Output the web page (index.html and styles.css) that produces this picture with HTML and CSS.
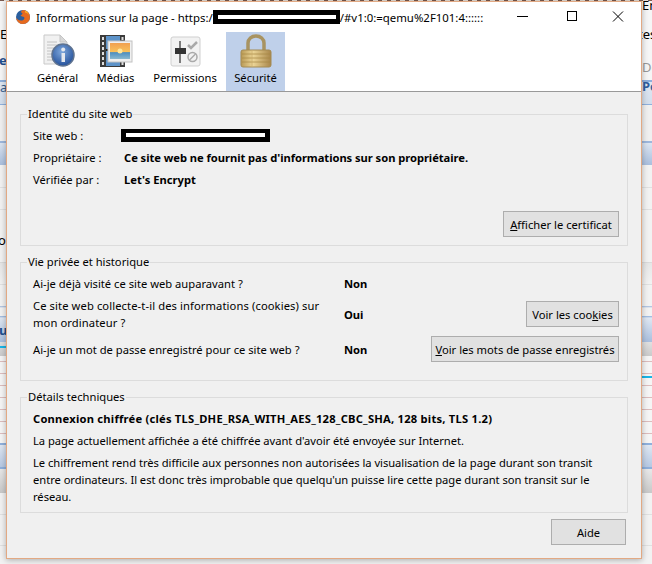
FILE: index.html
```html
<!DOCTYPE html>
<html lang="fr">
<head>
  <meta charset="UTF-8">
  <meta name="viewport" content="width=device-width, initial-scale=1.0">
  <title>Informations sur la page</title>
  <link rel="stylesheet" href="styles.css">
</head>
<body>
  <!-- bits of the browser window behind the dialog -->
  <div class="backdrop">
    <span class="frag frag-e">E</span>
    <span class="frag frag-e2">e</span>
    <span class="frag frag-a">a</span>
    <span class="frag frag-oi">oi</span>
    <span class="frag frag-u">u</span>
    <span class="frag frag-en">En</span>
    <span class="frag frag-tes">tes</span>
    <span class="frag frag-de">Dé</span>
    <span class="frag frag-pe">Pe</span>
    <span class="cyan cyan-left"></span>
    <span class="cyan cyan-right"></span>
  </div>

  <div class="window">
    <div class="titlebar">
      <svg class="app-icon" width="16" height="16" viewBox="0 0 16 16">
        <circle cx="8" cy="8" r="7" fill="#2b5f9e"/>
        <path d="M8 1a7 7 0 0 1 7 7 7 7 0 0 1-7 7 7 7 0 0 1-7-6.500c1 2 3 3 5 3 3 0 4-2 3-3.500-1-.5-3-.5-3.500-1.500 1-1 2-1 2-2-1-1-1.500-1-1.500-2C6 3 6.500 1.500 8 1z" fill="#e66a1f"/>
        <path d="M10 1.500c2 .8 3.500 2.500 4 4.500-1-1.500-2.500-2.500-4-2.500z" fill="#f7b32b"/>
      </svg>
      <span class="title-text">Informations sur la page - https:/</span>
      <span class="redact-title"><span></span></span>
      <span class="title-text">/#v1:0:=qemu%2F101:4::::::</span>
      <div class="controls">
        <svg width="46" height="12" viewBox="0 0 46 12"><path d="M14 5.500h11" stroke="#000" fill="none"/></svg>
        <svg width="46" height="12" viewBox="0 0 46 12"><rect x="18.500" y=".5" width="9" height="9" stroke="#000" fill="none"/></svg>
        <svg width="46" height="12" viewBox="0 0 46 12"><path d="M18 .5l10 10M28 .5l-10 10" stroke="#000" fill="none"/></svg>
      </div>
    </div>

    <div class="tabs">
      <div class="tab tab-general">
        <svg width="34" height="34" viewBox="0 0 34 34">
          <defs>
            <radialGradient id="infoBlue" cx="45%" cy="35%" r="70%">
              <stop offset="0" stop-color="#7fa8dc"/>
              <stop offset="1" stop-color="#1d4a96"/>
            </radialGradient>
          </defs>
          <path d="M3 1h16l7 7v22H3z" fill="#f1f1f1" stroke="#c9c9c9"/>
          <path d="M19 1v7h7z" fill="#d8d8d8" stroke="#c4c4c4"/>
          <path d="M6 8h10M6 11h14M6 14h12M6 17h8M6 20h8M6 23h8M6 26h9" stroke="#c2c2c2"/>
          <circle cx="22" cy="21" r="11" fill="url(#infoBlue)" stroke="#5f7390" stroke-width="1.500"/>
          <rect x="20.500" y="19" width="3.500" height="9" fill="#e4e8ee"/>
          <circle cx="22.200" cy="15.500" r="2" fill="#e4e8ee"/>
        </svg>
        <span>Général</span>
      </div>
      <div class="tab tab-media">
        <svg width="34" height="34" viewBox="0 0 34 34">
          <defs>
            <linearGradient id="sunset" x1="0" y1="0" x2="0" y2="1">
              <stop offset="0" stop-color="#f0a050"/>
              <stop offset=".55" stop-color="#f9c15a"/>
              <stop offset=".6" stop-color="#4d8fc0"/>
              <stop offset="1" stop-color="#89b9cf"/>
            </linearGradient>
          </defs>
          <rect x="1" y="1" width="25" height="32" fill="#3b3b3b"/>
          <rect x="7" y="2" width="14" height="30" fill="#5d93c9"/>
          <path d="M3 3h2v3H3zM3 8h2v3H3zM3 13h2v3H3zM3 18h2v3H3zM3 23h2v3H3zM3 28h2v3H3zM22.500 3h2v3h-2zM22.500 28h2v3h-2z" fill="#dedede"/>
          <path d="M7 16h7" stroke="#1f1f1f" stroke-width="2"/>
          <rect x="9" y="7" width="24" height="21" fill="#f0f0f0" stroke="#c2c2c2"/>
          <rect x="11" y="9" width="20" height="16" fill="url(#sunset)"/>
          <circle cx="21" cy="17" r="2.500" fill="#ffe69a"/>
        </svg>
        <span>Médias</span>
      </div>
      <div class="tab tab-perms">
        <svg width="34" height="34" viewBox="0 0 34 34">
          <rect x="3" y="3" width="29" height="29" rx="2" fill="#f2f2f2" stroke="#cfcfcf"/>
          <path d="M12 7v22" stroke="#555" stroke-width="1.500"/>
          <rect x="7" y="14" width="11" height="6" fill="#333"/>
          <path d="M20 11l3 3 6-6" stroke="#a9a9a9" stroke-width="2.500" fill="none"/>
          <circle cx="24.500" cy="23" r="4.500" stroke="#a9a9a9" stroke-width="1.500" fill="none"/>
          <path d="M21.500 26l6-6" stroke="#a9a9a9" stroke-width="1.500"/>
        </svg>
        <span>Permissions</span>
      </div>
      <div class="tab tab-active">
        <svg width="34" height="34" viewBox="0 0 34 34">
          <defs>
            <linearGradient id="lockBody" x1="0" y1="0" x2="1" y2="0">
              <stop offset="0" stop-color="#b99a55"/>
              <stop offset=".4" stop-color="#ecd596"/>
              <stop offset="1" stop-color="#a8864a"/>
            </linearGradient>
          </defs>
          <path d="M9 17V9a8 7 0 0 1 16 0v8" fill="none" stroke="#a89361" stroke-width="3.500"/>
          <rect x="2" y="16" width="30" height="17" rx="2" fill="url(#lockBody)" stroke="#a38a52"/>
          <path d="M3 20h28M3 24h28M3 28h28" stroke="#a58643" stroke-opacity=".7"/>
          <path d="M13 17v15" stroke="#c6a868" stroke-opacity=".6"/>
        </svg>
        <span>Sécurité</span>
      </div>
    </div>

    <div class="content">
      <fieldset class="group group-identity">
        <legend>Identité du site web</legend>
        <div class="identity">
          <span>Site web :</span>
          <span class="redact-site"><span></span></span>
          <span>Propriétaire :</span>
          <b class="owner">Ce site web ne fournit pas d'informations sur son propriétaire.</b>
          <span>Vérifiée par :</span>
          <b>Let's Encrypt</b>
        </div>
        <div class="actions">
          <button class="button button-cert"><u>A</u>fficher le certificat</button>
        </div>
      </fieldset>

      <fieldset class="group group-privacy">
        <legend>Vie privée et historique</legend>
        <div class="row row-first">
          <span class="question">Ai-je déjà visité ce site web auparavant ?</span>
          <b class="answer">Non</b>
        </div>
        <div class="row row-second">
          <span class="question question-long">Ce site web collecte-t-il des informations (cookies) sur<br>mon ordinateur ?</span>
          <b class="answer">Oui</b>
          <button class="button button-cookies">Voir les coo<u>k</u>ies</button>
        </div>
        <div class="row row-third">
          <span class="question">Ai-je un mot de passe enregistré pour ce site web ?</span>
          <b class="answer">Non</b>
          <button class="button button-passwords"><u>V</u>oir les mots de passe enregistrés</button>
        </div>
      </fieldset>

      <fieldset class="group group-tech">
        <legend>Détails techniques</legend>
        <p class="tech-head"><b>Connexion chiffrée (clés TLS_DHE_RSA_WITH_AES_128_CBC_SHA, 128 bits, TLS 1.2)</b></p>
        <p>La page actuellement affichée a été chiffrée avant d'avoir été envoyée sur Internet.</p>
        <p>Le chiffrement rend très difficile aux personnes non autorisées la visualisation de la page durant son transit<br>entre ordinateurs. Il est donc très improbable que quelqu'un puisse lire cette page durant son transit sur le<br>réseau.</p>
      </fieldset>

      <div class="footer">
        <button class="button button-help">Aide</button>
      </div>
    </div>
  </div>
</body>
</html>
```

FILE: styles.css
```css
html, body {
  margin: 0;
  height: 100%;
  overflow: hidden;
}

body {
  font-family: "Noto Sans", Arial, sans-serif;
  font-size: 11.2px;
  line-height: 17px;
  color: #000;
  background-color: #f2f2f2;
}

.backdrop {
  position: absolute;
  inset: 0;
  background-image:
    linear-gradient(to right, #7a5a50 50%, #e8e0d8 50%),
    repeating-linear-gradient(to bottom, transparent 0, transparent 11px, #dcbcbc 11px, #dcbcbc 12px),
    linear-gradient(to bottom,
      #f6f6f6 0, #f6f6f6 80px, #8fb0dc 80px, #8fb0dc 82px,
      #dfe7f2 82px, #d3deec 104px, #8fb0dc 104px, #8fb0dc 105px,
      #f0f0f0 105px, #f0f0f0 141px, #9db7dc 141px, #9db7dc 143px,
      #dce5f1 143px, #a9bedd 165px, #f2f2f2 165px, #f2f2f2 187px,
      #cfcfcf 187px, #f2f2f2 188px, #f2f2f2 209px, #cfcfcf 209px,
      #f2f2f2 210px, #f2f2f2 262px, #cfcfcf 262px, #e6e6e6 263px,
      #f2f2f2 284px, #cfcfcf 284px, #f2f2f2 285px, #f2f2f2 306px,
      #9db7dc 306px, #f2f2f2 308px, #f2f2f2 316px, #8fb0dc 316px,
      #dfe7f2 318px, #a9bedd 342px, #e0e0e0 342px, #cacaca 356px,
      #f5f5f5 356px, #f5f5f5 443px, #8fb0dc 443px, #8fb0dc 445px,
      #dfe7f2 445px, #b6c8e2 467px, #8fb0dc 467px, #8fb0dc 469px,
      #e8e8e8 469px, #c8c8c8 493px, #f2f2f2 493px, #f2f2f2 514px,
      #cfcfcf 514px, #f2f2f2 515px, #f2f2f2 545px, #cfcfcf 545px, #f2f2f2 546px);
  background-size: 9px 1px, 100% 84px, 100% 100%;
  background-position: 0 0, 0 350px, 0 0;
  background-repeat: repeat-x, no-repeat, no-repeat;
}

.frag {
  position: absolute;
  font-size: 13px;
  line-height: 16px;
}

.frag-e { left: 0; top: 26px; }
.frag-e2 { left: -1px; top: 52px; color: #1f4f8f; font-weight: bold; }
.frag-a { left: 0; top: 79px; color: #36618f; }
.frag-oi { left: -2px; top: 232px; }
.frag-u { left: -1px; top: 322px; color: #1f4f8f; font-weight: bold; }
.frag-en { left: 642px; top: -3px; }
.frag-tes { left: 638px; top: 26px; }
.frag-de { left: 642px; top: 59px; color: #999; }
.frag-pe { left: 642px; top: 78px; color: #2f5f9f; font-weight: bold; }

.cyan {
  position: absolute;
  background: #19b5e6;
}

.cyan-left { left: 0; top: 346px; width: 6px; height: 2px; }
.cyan-right { left: 642px; top: 376px; width: 10px; height: 2px; }

.window {
  position: absolute;
  left: 6px;
  top: 1px;
  width: 634px;
  height: 556px;
  border: 1px solid #e2a983;
  background: #f0f0f0;
  box-shadow: 0 1px 6px rgba(0, 0, 0, 0.3);
  display: flex;
  flex-direction: column;
}

.titlebar {
  flex: none;
  height: 30px;
  background: #fff;
  display: flex;
  align-items: center;
}

.app-icon {
  margin-left: 8px;
  margin-right: 5px;
}

.title-text {
  font-size: 11.4px;
  white-space: nowrap;
}

.redact-title {
  width: 127px;
  height: 14px;
  background: #000;
  display: flex;
  align-items: center;
  justify-content: flex-end;
  padding-right: 4px;
  box-sizing: border-box;
}

.redact-title span {
  width: 118px;
  height: 4px;
  background: #fff;
}

.controls {
  margin-left: auto;
  display: flex;
}

.tabs {
  flex: none;
  height: 59px;
  background: #fff;
  border-bottom: 1px solid #999;
  display: flex;
  padding-left: 21px;
}

.tab {
  display: flex;
  flex-direction: column;
  align-items: center;
  justify-content: flex-end;
  padding-bottom: 5px;
  gap: 1px;
}

.tab-general { width: 59px; }
.tab-media { width: 57px; }
.tab-perms { width: 82px; }

.tab-active {
  width: 59px;
  background: #bfd0ea;
}

.content {
  flex: 1;
  padding: 14px 13px 0;
}

.group {
  margin: 8px 0 0;
  padding: 0 8px 0 12px;
  border: 1px solid #dcdcdc;
  min-width: 0;
}

.group:first-child {
  margin-top: 0;
}

.group legend {
  padding: 0 1px;
  line-height: 16px;
  margin-left: -6px;
}

.identity {
  display: grid;
  grid-template-columns: 91px 1fr;
  grid-auto-rows: 22px;
  align-items: center;
  padding-top: 2px;
}

.owner {
  letter-spacing: -0.05px;
}

.redact-site {
  width: 149px;
  height: 13px;
  margin-left: -3px;
  background: #000;
  display: flex;
  align-items: center;
  justify-content: center;
}

.redact-site span {
  width: 139px;
  height: 4px;
  background: #fff;
}

.actions {
  display: flex;
  justify-content: flex-end;
  margin-top: 21px;
  padding-bottom: 8px;
}

.button {
  height: 26px;
  padding: 0;
  font: inherit;
  color: #000;
  background-color: #e1e1e1;
  border: 1px solid #adadad;
  white-space: nowrap;
}

.button-cert { width: 116px; }
.button-cookies { width: 93px; }
.button-passwords { width: 188px; }

.group-privacy {
  padding-bottom: 18px;
}

.row {
  display: flex;
  align-items: center;
}

.row-first {
  height: 22px;
  margin-top: 2px;
}

.row-second {
  height: 34px;
  margin-top: 3px;
}

.row-third {
  height: 26px;
  margin-top: 5px;
}

.question {
  width: 311px;
  flex: none;
}

.question-long {
  letter-spacing: 0.1px;
}

.answer {
  flex: 1;
}

.group-tech {
  padding-bottom: 7px;
}

.group-tech p {
  margin: 5px 0 0;
  white-space: nowrap;
  letter-spacing: -0.04px;
}

.group-tech .tech-head {
  margin-top: 5px;
  letter-spacing: 0.22px;
}

.footer {
  display: flex;
  justify-content: flex-end;
  margin-top: 6px;
  padding-right: 2px;
}

.button-help {
  width: 75px;
}
```
